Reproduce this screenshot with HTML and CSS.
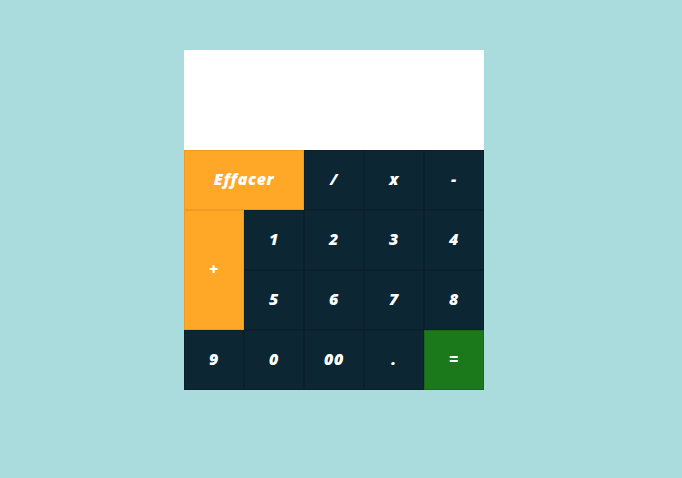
FILE: index.html
```html
<!DOCTYPE html>
<html lang="fr">
<head>
<meta charset="utf-8">
<link rel="stylesheet" href="styles.css">
</head>
<body>
<div class="calc">
  <div class="display"></div>
  <div class="keys">
    <button class="key orange wide">Effacer</button>
    <button class="key">/</button>
    <button class="key">x</button>
    <button class="key">-</button>
    <button class="key orange tall">+</button>
    <button class="key">1</button>
    <button class="key">2</button>
    <button class="key">3</button>
    <button class="key">4</button>
    <button class="key">5</button>
    <button class="key">6</button>
    <button class="key">7</button>
    <button class="key">8</button>
    <button class="key">9</button>
    <button class="key">0</button>
    <button class="key">00</button>
    <button class="key">.</button>
    <button class="key green">=</button>
  </div>
</div>
</body>
</html>
```
FILE: styles.css
```css
html, body {
  margin: 0;
  padding: 0;
  background: #aadcdd;
  height: 100%;
}
body {
  padding: 50px 0 0 184px;
  box-sizing: border-box;
}
.calc {
  width: 300px;
}
.display {
  height: 100px;
  background: #ffffff;
}
.keys {
  display: grid;
  grid-template-columns: repeat(5, 60px);
  grid-auto-rows: 60px;
}
.key {
  margin: 0;
  padding: 0 0 2px 0;
  border: 1px solid rgba(0, 0, 0, 0.12);
  background: #0c2634;
  color: #ffffff;
  font-family: "Open Sans", "DejaVu Sans", sans-serif;
  font-weight: 800;
  font-style: italic;
  font-size: 16px;
  letter-spacing: 0.6px;
  display: flex;
  align-items: center;
  justify-content: center;
}
.orange {
  background: #ffa726;
  border-color: #ef9b22;
}
.green {
  background: #1b781b;
}
.wide {
  grid-column: span 2;
}
.tall {
  grid-row: span 2;
}
```
